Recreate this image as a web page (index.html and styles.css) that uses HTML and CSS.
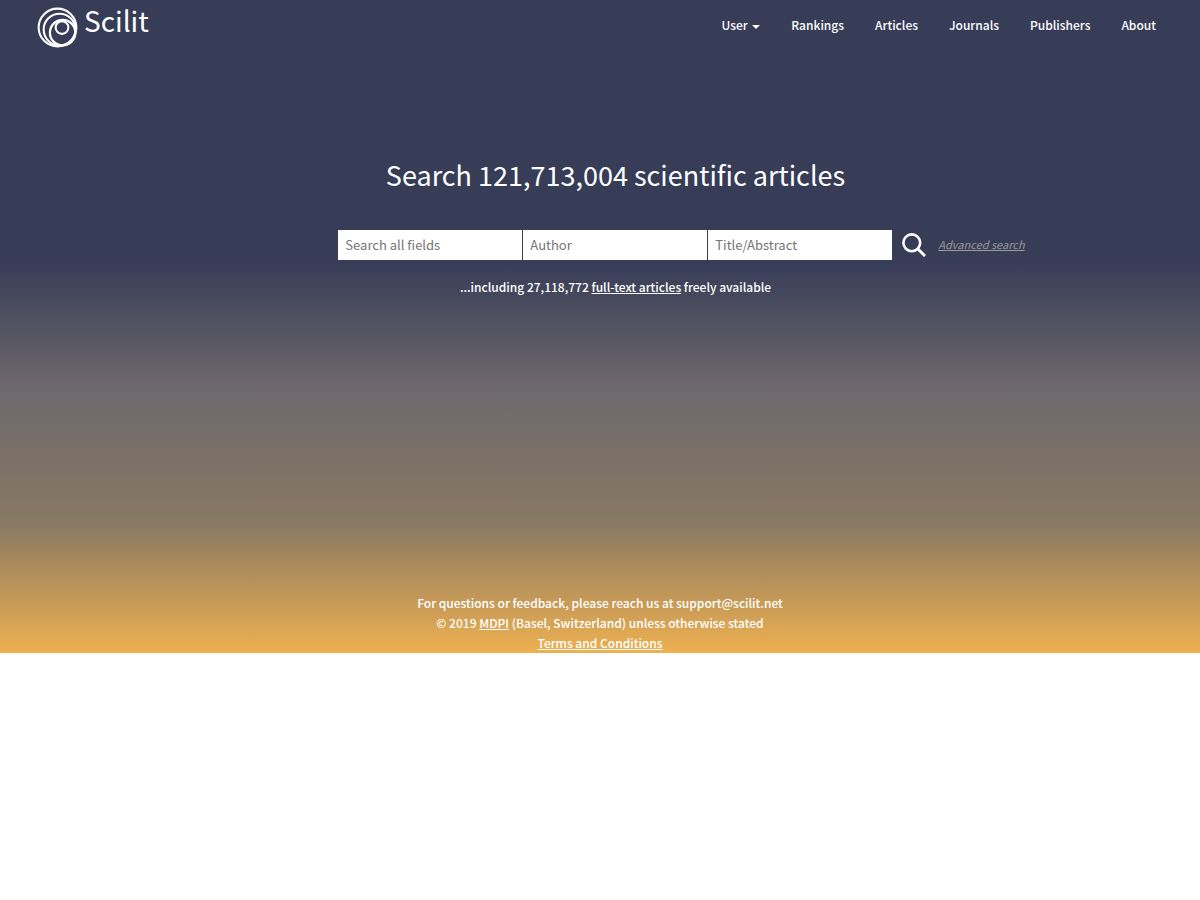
FILE: index.html
```html
<!DOCTYPE html>
<html lang="en">
<head>
  <meta charset="UTF-8">
  <meta name="viewport" content="width=device-width, initial-scale=1.0">
  <title>Scilit | Scientific Literature</title>
  <link rel="stylesheet" href="styles.css">
</head>
<body>
  <div class="page">
    <header class="header">
      <a class="logo" href="#">
        <svg class="logo-icon" viewBox="0 0 40 40" fill="none" stroke="#fff" stroke-width="2" aria-hidden="true">
          <circle cx="20" cy="20" r="18.4"/>
          <circle cx="22" cy="22" r="15.5"/>
          <circle cx="25" cy="25" r="12.4" stroke-width="2.2"/>
          <circle cx="24.4" cy="20" r="6.2"/>
        </svg>
        <span>Scilit</span>
      </a>
      <nav class="menu">
        <a href="#">User <span class="caret"></span></a>
        <a href="#">Rankings</a>
        <a href="#">Articles</a>
        <a href="#">Journals</a>
        <a href="#">Publishers</a>
        <a href="#">About</a>
      </nav>
    </header>

    <main class="main">
      <h1>Search 121,713,004 scientific articles</h1>
      <form class="search">
        <div class="search-fields">
          <input type="text" name="q" placeholder="Search all fields" aria-label="Search all fields">
          <input type="text" name="author" placeholder="Author" aria-label="Author">
          <input type="text" name="title" placeholder="Title/Abstract" aria-label="Title/Abstract">
        </div>
        <button class="search-button" type="submit" aria-label="Search">
          <svg viewBox="0 0 24 24" fill="none" stroke="#fff" aria-hidden="true">
            <circle cx="9.8" cy="9.8" r="8.4" stroke-width="2.6"/>
            <path d="M15.8 15.8L23 23" stroke-width="3"/>
          </svg>
        </button>
        <a class="advanced" href="#">Advanced search</a>
      </form>
      <p class="including">...including 27,118,772 <a href="#">full-text articles</a> freely available</p>
    </main>

    <footer class="footer">
      <p>For questions or feedback, please reach us at support@scilit.net</p>
      <p>© 2019 <a href="#">MDPI</a> (Basel, Switzerland) unless otherwise stated</p>
      <p><a href="#">Terms and Conditions</a></p>
    </footer>
  </div>
</body>
</html>
```
FILE: styles.css
```css
* {
  box-sizing: border-box;
}

body {
  margin: 0;
  background: #fff;
  color: #fff;
  font-family: "Noto Sans CJK SC", "Open Sans", sans-serif;
  font-size: 12px;
  font-weight: 500;
  line-height: 20px;
}

a {
  color: inherit;
}

p {
  margin: 0;
}

.page {
  background: linear-gradient(#373c57 40%, #6e696c 60%, #887864 80%, #eeb050);
}

/* header */
.header {
  display: flex;
  justify-content: space-between;
  align-items: flex-start;
  padding: 7px 44px 0 37px;
}

.logo {
  display: flex;
  gap: 6px;
  font-size: 28px;
  font-weight: 400;
  line-height: 26px;
  text-decoration: none;
}

.logo-icon {
  width: 41px;
  height: 41px;
}

.menu {
  display: flex;
  gap: 31px;
  padding-top: 8px;
}

.menu a {
  text-decoration: none;
}

.caret {
  display: inline-block;
  margin-left: 2px;
  border-top: 4px solid #fff;
  border-left: 4px solid transparent;
  border-right: 4px solid transparent;
  vertical-align: middle;
}

/* search */
.main {
  display: flex;
  flex-direction: column;
  align-items: center;
  padding: 107px 0 296px 31px;
}

h1 {
  margin: 0 0 35px;
  font-size: 27px;
  line-height: 40px;
  font-weight: 400;
}

.search {
  display: flex;
  align-items: center;
  padding-left: 100px;
  margin-right: -32px;
}

.search-fields {
  display: flex;
  gap: 1px;
}

.search-fields input {
  width: 184px;
  height: 30px;
  padding: 0 7px 2px;
  border: 0;
  border-radius: 0;
  background: #fff;
  color: #333;
  font-family: inherit;
  font-size: 13px;
}

.search-fields input::placeholder {
  color: #757575;
}

.search-button {
  width: 24px;
  height: 24px;
  margin: 0 12px 0 10px;
  padding: 0;
  border: 0;
  background: none;
  cursor: pointer;
}

.search-button svg {
  display: block;
}

.advanced {
  padding-bottom: 2px;
  color: #999;
  font-size: 11px;
  font-weight: 400;
  font-style: italic;
}

.including {
  margin-top: 17px;
}

.footer {
  text-align: center;
}
```
